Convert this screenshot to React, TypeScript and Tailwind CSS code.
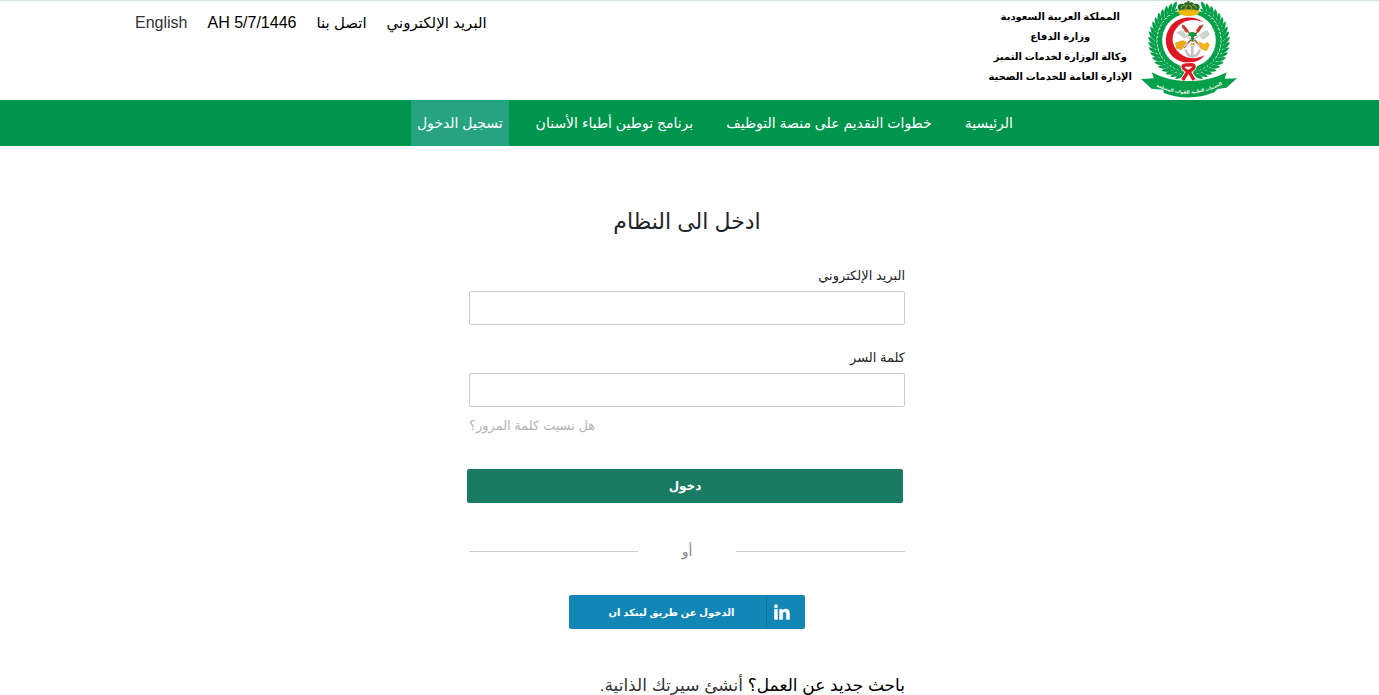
import React from "react";

const ministryLines = [
  "المملكة العربية السعودية",
  "وزارة الدفاع",
  "وكالة الوزارة لخدمات التميز",
  "الإدارة العامة للخدمات الصحية",
];

const navItems = [
  { label: "الرئيسية", active: false },
  { label: "خطوات التقديم على منصة التوظيف", active: false },
  { label: "برنامج توطين أطباء الأسنان", active: false },
  { label: "تسجيل الدخول", active: true },
];

function Branch() {
  const leaves = Array.from({ length: 20 }, (_, i) => 99 + i * 7.5);
  return (
    <g>
      <path d="M162 218 A98 98 0 0 1 143 28" fill="none" stroke="#07a04a" strokeWidth="6" />
      {leaves.map((deg) => {
        const rad = (deg * Math.PI) / 180;
        const x = 177 + 98 * Math.cos(rad);
        const y = 121 + 98 * Math.sin(rad);
        return (
          <g key={deg} transform={`translate(${x} ${y}) rotate(${deg + 90})`} fill="#07a04a">
            <path d="M-4 0 C-1 -12 9 -22 23 -23 C22 -14 12 -3 -4 0Z" />
            <path d="M-4 0 C-1 11 8 20 21 20 C20 12 11 3 -4 0Z" />
          </g>
        );
      })}
    </g>
  );
}

function Emblem() {
  return (
    <svg viewBox="30 0 294 300" className="h-[100px] w-[98px] shrink-0" role="img" aria-label="شعار الخدمات الصحية">
      <Branch />
      <g transform="translate(354 0) scale(-1 1)">
        <Branch />
      </g>
      <circle cx="177" cy="120" r="75" fill="#fff" />
      <g strokeLinecap="round" fill="none">
        <path d="M158 76 L212 142" stroke="#b5502a" strokeWidth="5" />
        <path d="M218 76 L164 142" stroke="#b5502a" strokeWidth="5" />
        <path d="M152 94 L224 150" stroke="#d0cfcd" strokeWidth="4" />
        <path d="M226 94 L152 148" stroke="#d0cfcd" strokeWidth="4" />
        <path d="M187 138 V170 M168 152 Q172 168 187 170 Q203 168 208 152" stroke="#c5c4c3" strokeWidth="8" />
      </g>
      <path d="M139 97 L157 90 L174 111 L160 114Z M209 109 L232 90 L240 104 L219 119Z" fill="#d2d0cd" />
      <path d="M135 128 L158 121 L171 126 L155 150 L139 146Z" fill="#e8ab20" />
      <path d="M206 123 L222 132 L232 125 L240 135 L230 153 L212 147Z" fill="#f0b51d" />
      <path d="M155 80 L162 75 L176 92 L168 98Z M210 75 L217 79 L206 98 L198 91Z" fill="#c7372c" />
      <path d="M184 109 h7 v18 h-7Z M174 109 Q176 96 187 96 Q199 96 201 109 L192 107 L187 113 L182 107Z" fill="#0a9848" />
      <path d="M180 125 h16 v12 h-16Z" fill="#fff" />
      <path d="M181 128 L195 136 M195 128 L181 136" stroke="#d3a334" strokeWidth="3" />
      <path d="M222 68 C196 46 150 46 124 76 C91 118 111 174 158 186 C184 192 209 185 224 166 C200 178 172 178 151 161 C122 138 121 102 143 80 C164 58 196 55 222 68Z" fill="#df1723" />
      <path d="M147 30 C137 17 149 9 161 12 C165 5 171 6 175 10 C182 5 188 6 192 12 C205 9 214 18 206 30Z" fill="#176f35" />
      <path d="M153 25 Q156 14 166 14 M200 25 Q197 14 186 14 M166 27 Q168 14 175 14 Q183 14 186 27" fill="none" stroke="#d9a314" strokeWidth="3" />
      <path d="M175 8 V32" stroke="#6b3a14" strokeWidth="3" />
      <circle cx="175" cy="6" r="4" fill="#5c7321" />
      <path d="M144 31 Q175 24 208 31 L205 43 Q175 54 147 43Z" fill="#eeb90e" />
      <path d="M148 32 Q175 26 204 32" fill="none" stroke="#8b5c15" strokeWidth="2" strokeDasharray="5 4" />
      <path d="M33 237 L72 235 L65 217 Q112 242 166 243 L188 243 Q245 241 290 217 L284 236 L321 235 L289 263 L262 267 L253 277 Q177 307 102 279 L99 269 L65 266Z" fill="#07a04a" />
      <path d="M177 216 C150 203 157 193 175 195 C194 191 203 202 173 216 L158 240 M177 214 L192 240" fill="none" stroke="#fff" strokeWidth="15" />
      <path d="M177 216 C150 203 157 193 175 195 C194 191 203 202 173 216 L158 240 M177 214 L192 240" fill="none" stroke="#df1723" strokeWidth="10" />
      <path id="motto" d="M75 258 Q177 306 280 252" fill="none" />
      <text direction="rtl" className="fill-white font-bold" fontFamily="DejaVu Sans, sans-serif" fontSize="13" textAnchor="middle">
        <textPath href="#motto" startOffset="50%">الخدمات الطبية للقوات المسلحة</textPath>
      </text>
    </svg>
  );
}

function LinkedInMark() {
  return (
    <svg viewBox="0 0 18 18" className="size-4" fill="#fff" aria-hidden="true">
      <circle cx="2.2" cy="2.4" r="2.1" />
      <path d="M.4 6H4v11.5H.4zM6.2 6h3.4v1.6C10.3 6.4 11.6 5.7 13.2 5.7c3.500 0 4.300 2.200 4.300 5.200v6.600h-3.600v-5.900c0-1.500-.1-2.900-1.900-2.900s-2.200 1.400-2.200 2.900v5.900H6.200z" stroke="#fff" strokeWidth=".5" />
    </svg>
  );
}

export default function App() {
  return (
    <div dir="rtl" className="min-h-screen overflow-x-hidden bg-white font-['Liberation_Sans','DejaVu_Sans',sans-serif] text-[#212529]">
      <header className="border-t border-[#d6e2de] ps-1.5">
        <div className="mx-auto flex max-w-[1103px] items-start justify-between">
          <div className="flex gap-2">
            <div className="-mt-px">
              <Emblem />
            </div>
            <div className="pt-1.5 text-center text-[10px] leading-5 font-bold text-black">
              {ministryLines.map((line) => (
                <p key={line}>{line}</p>
              ))}
            </div>
          </div>
          <div className="flex gap-5 pt-2.5 text-base leading-6 text-black">
            <a href="#mail" className="text-[15px] leading-6">البريد الإلكتروني</a>
            <a href="#contact" className="text-[15px] leading-6">اتصل بنا</a>
            <span dir="ltr">AH 5/7/1446</span>
            <a href="#en" className="text-[#333]">English</a>
          </div>
        </div>
      </header>

      <nav className="bg-[#00954d]">
        <div className="mx-auto flex h-[46px] max-w-[659px] gap-[21px] text-sm text-white">
          {navItems.map((item) => (
            <a
              key={item.label}
              href="#nav"
              className={
                item.active
                  ? "flex items-center bg-[#26a482] px-1.5 whitespace-nowrap"
                  : "flex items-center px-1.5 whitespace-nowrap"
              }
            >
              {item.label}
            </a>
          ))}
        </div>
      </nav>

      <main className="ps-[5px]">
        <div className="mx-auto max-w-[436px] pt-[60px]">
          <h1 className="text-center text-[22px] leading-8">ادخل الى النظام</h1>
          <form className="pt-7">
            <label htmlFor="email" className="block pb-[5px] text-[13px] leading-5">البريد الإلكتروني</label>
            <input id="email" type="email" className="block h-[34px] w-full rounded-xs border border-[#ccc] px-3" />
            <label htmlFor="password" className="block pt-[23px] pb-[5px] text-[13px] leading-5">كلمة السر</label>
            <input id="password" type="password" className="block h-[34px] w-full rounded-xs border border-[#ccc] px-3" />
            <div className="pt-[9px] text-end text-[13px] leading-5 text-[#b4b4b4]">
              <a href="#forgot">هل نسيت كلمة المرور؟</a>
            </div>
            <div className="pt-[33px]">
              <button type="submit" className="relative start-0.5 block h-[34px] w-full rounded-xs bg-[#187b62] text-xs font-bold text-white">
                دخول
              </button>
            </div>
          </form>
          <div className="flex items-center gap-11 pt-[38px] text-sm leading-5 text-[#888]">
            <span className="h-px flex-1 bg-[#ccc]" />
            <span>أو</span>
            <span className="h-px flex-1 bg-[#ccc]" />
          </div>
          <button type="button" className="mx-auto mt-[34px] flex h-[34px] w-[236px] items-center rounded-xs bg-[#1286b5] text-[10px] font-bold text-white">
            <span className="flex h-full w-[39px] items-center justify-center border-e border-[#0e759f] ps-2">
              <LinkedInMark />
            </span>
            <span className="flex-1 pe-2">الدخول عن طريق لينكد ان</span>
          </button>
          <p className="pt-[45px] text-[17px] leading-6 whitespace-nowrap text-black">
            باحث جديد عن العمل؟ <a href="#register" className="text-[#333]">أنشئ سيرتك الذاتية.</a>
          </p>
        </div>
      </main>
    </div>
  );
}
